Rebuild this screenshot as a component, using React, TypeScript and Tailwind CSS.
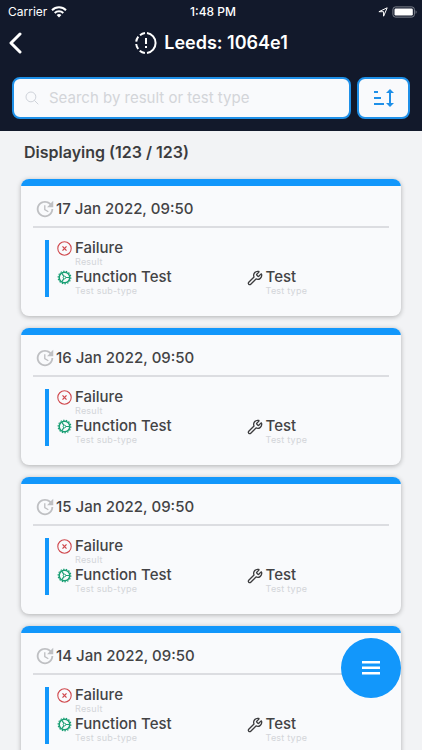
import { useState } from 'react';
import { Wrench } from 'lucide-react';
import { IoSearchOutline } from 'react-icons/io5';
import { MdUpdate } from 'react-icons/md';

const tests = [
  { id: 1, date: '17 Jan 2022, 09:50', result: 'Failure', subType: 'Function Test', type: 'Test' },
  { id: 2, date: '16 Jan 2022, 09:50', result: 'Failure', subType: 'Function Test', type: 'Test' },
  { id: 3, date: '15 Jan 2022, 09:50', result: 'Failure', subType: 'Function Test', type: 'Test' },
  { id: 4, date: '14 Jan 2022, 09:50', result: 'Failure', subType: 'Function Test', type: 'Test' },
];

function StatusBar() {
  return (
    <div className="grid h-5 grid-cols-3 items-center pl-2 pr-1 pt-1 text-xs text-white">
      <div className="flex items-center gap-1">
        <span>Carrier</span>
        <svg width="16" height="12" viewBox="0 0 16 12" fill="none" stroke="currentColor" strokeWidth="2">
          <path d="M1 4.2a10 10 0 0 1 14 0" />
          <path d="M3.7 7a6.2 6.2 0 0 1 8.6 0" />
          <path d="M8 11.5 5.6 9.1a3.4 3.4 0 0 1 4.8 0Z" fill="currentColor" stroke="none" />
        </svg>
      </div>
      <span className="text-center font-medium">1:48 PM</span>
      <div className="flex items-center justify-end gap-1">
        <svg width="10" height="10" viewBox="0 0 10 10" fill="none" stroke="currentColor" strokeLinejoin="round">
          <path d="M9.2.8 5.6 9.2V4.7H.9Z" />
        </svg>
        <svg width="26" height="12" viewBox="0 0 26 12" fill="none">
          <rect x="0.9" y="0.9" width="21.5" height="10.2" rx="2.6" stroke="#7d828d" />
          <rect x="2.5" y="2.5" width="18.3" height="7" rx="1.2" fill="white" />
          <path d="M23.6 4.2c1.3.4 1.3 3.2 0 3.6Z" fill="#7d828d" />
        </svg>
      </div>
    </div>
  );
}

function ProgressAlertIcon() {
  return (
    <svg width="24" height="24" viewBox="0 0 24 24" fill="none" stroke="currentColor" strokeWidth="2">
      <path d="M13 2.1a10 10 0 0 1 0 19.8" />
      <path d="M11 2.1a10 10 0 0 0-5 2.1M4.3 5.7a10 10 0 0 0-2.1 5M2.2 13a10 10 0 0 0 2 5M5.7 19.7a10 10 0 0 0 5.2 2.2" />
      <path d="M12 7v6M12 15v2" />
    </svg>
  );
}

function SortIcon() {
  return (
    <svg width="22" height="20" viewBox="0 0 22 20" fill="none" stroke="currentColor" strokeWidth="2">
      <path d="M1 4h4M1 10h7M1 16h10M17 3v14" />
      <path d="m13 5 4-4 4 4ZM13 15l4 4 4-4Z" fill="currentColor" stroke="none" />
    </svg>
  );
}

function FailureIcon() {
  return (
    <svg className="text-[#d04a4f]" width="15" height="15" viewBox="0 0 15 15" fill="none" stroke="currentColor">
      <circle cx="7.5" cy="7.5" r="6.7" strokeWidth="1.1" />
      <path d="m5.5 5.4 4 4.2M9.5 5.4l-4 4.2" strokeWidth="1.3" />
    </svg>
  );
}

function GearIcon() {
  return (
    <svg className="text-[#1a9f74]" width="15" height="15" viewBox="0 0 15 15" fill="none" stroke="currentColor">
      <circle cx="7.5" cy="7.5" r="5.3" strokeWidth="1.5" />
      <circle cx="7.5" cy="7.5" r="6.3" strokeWidth="1.2" pathLength="28" strokeDasharray="1 1" />
      <circle cx="7.5" cy="7.5" r="1.3" />
      <path d="M8.8 7.5h4M6.8 6.4 4.9 3.2M6.8 8.6l-1.9 3.2" strokeWidth="1.2" />
    </svg>
  );
}

function Field({ icon, value, label }: { icon: React.ReactNode; value: string; label: string }) {
  return (
    <div className="flex gap-[3px]">
      <div className="flex h-[17px] w-[15px] shrink-0 items-center justify-center">{icon}</div>
      <div>
        <div className="text-[15px] font-medium leading-4 text-[#434345]">{value}</div>
        <div className="text-[9px] leading-[11px] tracking-wide text-[#d3d5d9]">{label}</div>
      </div>
    </div>
  );
}

function TestCard({ test }: { test: (typeof tests)[number] }) {
  return (
    <article className="shrink-0 overflow-hidden rounded-lg bg-[#f9fafc] shadow-[0_1px_5px_rgba(0,0,0,0.28)]">
      <div className="h-[7px] bg-[#1297fb]" />
      <div className="px-3 pb-[19px] pt-3">
        <div className="flex items-center border-b-2 border-[#dcdde1] pb-[6px] pl-[1px]">
          <MdUpdate className="size-[22px] shrink-0 text-[#bfc0c3]" />
          <h2 className="text-[15px] font-medium leading-5 text-[#434345]">{test.date}</h2>
        </div>
        <div className="ml-3 mt-3 flex flex-col gap-[2px] border-l-4 border-[#1297fb] pb-[1px] pl-2">
          <Field icon={<FailureIcon />} value={test.result} label="Result" />
          <div className="grid grid-cols-[190fr_141fr]">
            <Field icon={<GearIcon />} value={test.subType} label="Test sub-type" />
            <Field icon={<Wrench className="size-4 shrink-0 text-[#3c3c3e]" />} value={test.type} label="Test type" />
          </div>
        </div>
      </div>
    </article>
  );
}

export default function App() {
  const [search, setSearch] = useState('');

  return (
    <div className="flex h-screen flex-col bg-[#f2f3f5] font-['Inter',sans-serif]">
      <header className="bg-[#12192b] pb-3">
        <StatusBar />
        <div className="grid h-[57px] grid-cols-[32px_1fr_32px] pt-[11px] text-white">
          <button aria-label="Back" className="flex h-6 items-center pl-2">
            <svg width="14" height="22" viewBox="0 0 14 22" fill="none" stroke="currentColor" strokeWidth="3" strokeLinecap="round" strokeLinejoin="round">
              <path d="m12 2-9 9 9 9" />
            </svg>
          </button>
          <div className="flex h-6 items-center justify-center gap-[6px]">
            <ProgressAlertIcon />
            <h1 className="text-lg font-semibold leading-6">Leeds: 1064e1</h1>
          </div>
        </div>
        <div className="flex gap-[6px] px-3">
          <label className="flex h-[42px] flex-1 items-center gap-[9px] rounded-lg border-2 border-[#1e90e8] bg-[#f9fafc] pl-[10px] pr-3">
            <IoSearchOutline className="size-4 shrink-0 text-[#cfd3da]" />
            <input
              type="text"
              aria-label="Search by result or test type"
              placeholder="Search by result or test type"
              value={search}
              onChange={(e) => setSearch(e.target.value)}
              className="w-full min-w-0 bg-transparent text-[15px] text-[#434345] outline-none placeholder:text-[#d3d5d9]"
            />
          </label>
          <button
            aria-label="Sort"
            className="flex h-[42px] w-[53px] items-center justify-center rounded-lg border-2 border-[#1e90e8] bg-[#f9fafc] text-[#1e90e8]"
          >
            <SortIcon />
          </button>
        </div>
      </header>

      <main className="flex flex-1 flex-col overflow-y-auto px-[21px] pb-5 [scrollbar-width:none]">
        <p className="mb-4 mt-[10px] pl-[3px] text-base font-semibold leading-[22px] text-[#3c3c3e]">Displaying (123 / 123)</p>
        <div className="flex flex-col gap-3">
          {tests.map((test) => (
            <TestCard key={test.id} test={test} />
          ))}
        </div>
      </main>

      <button
        aria-label="Menu"
        className="fixed bottom-[52px] right-[21px] flex size-[60px] items-center justify-center rounded-full bg-[#1297fb] text-white"
      >
        <svg width="18" height="14" viewBox="0 0 18 14" fill="currentColor">
          <path d="M0 0h18v2.6H0zM0 5.5h18v2.6H0zM0 11h18v2.6H0z" />
        </svg>
      </button>
    </div>
  );
}
